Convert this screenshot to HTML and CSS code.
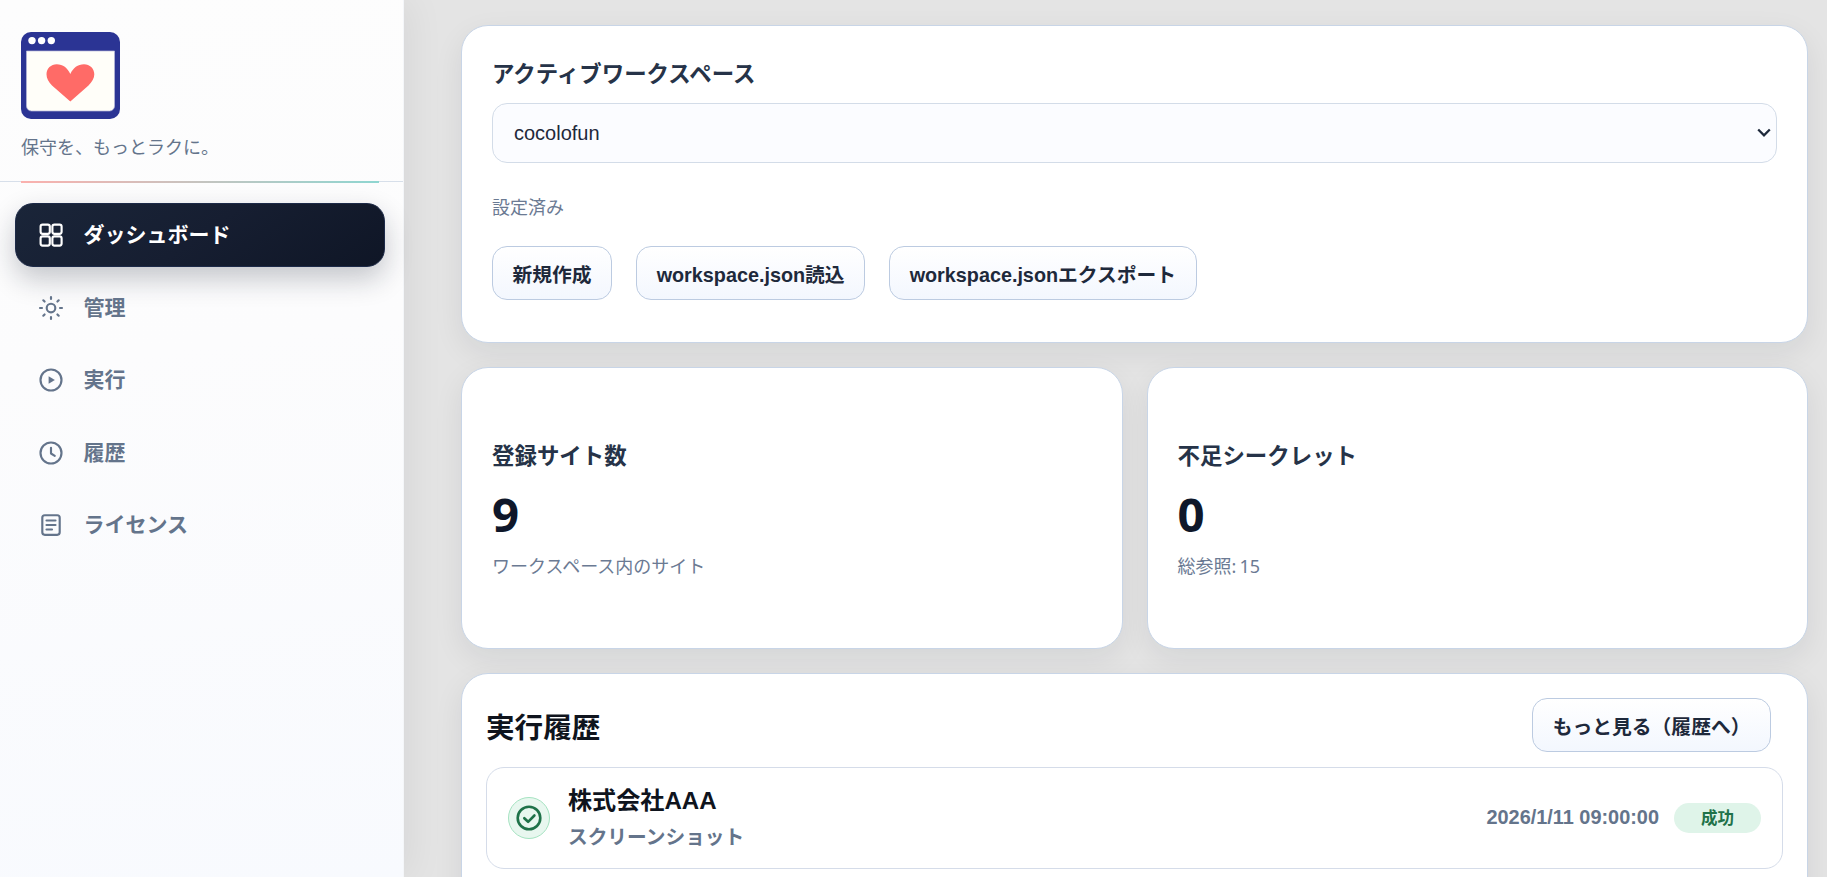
FILE: index.html
```html
<!DOCTYPE html>
<html lang="ja">
<head>
<meta charset="utf-8">
<title>ダッシュボード</title>
<link rel="stylesheet" href="styles.css">
</head>
<body>
<div class="app">
  <aside class="sidebar">
    <div class="brand">
      <svg class="logo" viewBox="0 0 99 87">
        <rect width="99" height="87" rx="10" fill="#2b3494"/>
        <circle cx="11" cy="8.6" r="3.7" fill="#fff"/><circle cx="20.6" cy="8.6" r="3.7" fill="#fff"/><circle cx="30.3" cy="8.6" r="3.7" fill="#fff"/>
        <path d="M5.5 19h88v55a5 5 0 0 1-5 5h-78a5 5 0 0 1-5-5z" fill="#fffef9" stroke="#b7b9d8" stroke-width=".7"/>
        <path d="M49.3 69.5 31 53.5C27.500 50 25.500 46.500 25.500 42.300C25.500 36.500 30 32.300 35.700 32.300C42 32.300 46.500 36 49.300 42C52.200 36 56.700 32.300 63 32.300C68.700 32.300 73.300 36.500 73.300 42.300C73.300 46.500 71 50 67.500 53.500Z" fill="#ff6b67"/>
      </svg>
      <p class="tagline">保守を、もっとラクに。</p>
    </div>
    <nav class="nav">
      <a class="nav-item active"><svg class="icon" viewBox="0 0 26 26"><rect x="2.600" y="2.600" width="9.200" height="9.200" rx="2"/><rect x="14.400" y="2.600" width="9.200" height="9.200" rx="2"/><rect x="2.600" y="14.400" width="9.200" height="9.200" rx="2"/><rect x="14.400" y="14.400" width="9.200" height="9.200" rx="2"/></svg><span class="nav-label">ダッシュボード</span></a>
      <a class="nav-item"><svg class="icon" viewBox="0 0 26 26"><circle cx="13" cy="13" r="4.300"/><path d="M13 2v2M13 22v2M2 13h2M22 13h2M5.300 5.300l1.300 1.300M19.400 19.400l1.300 1.300M5.300 20.700l1.300-1.300M19.400 6.600l1.300-1.300"/></svg><span class="nav-label">管理</span></a>
      <a class="nav-item"><svg class="icon" viewBox="0 0 26 26"><circle cx="13" cy="13" r="10.500"/><path class="solid" d="M10.600 9.200v7.600l6.300-3.800z"/></svg><span class="nav-label">実行</span></a>
      <a class="nav-item"><svg class="icon" viewBox="0 0 26 26"><circle cx="13" cy="13" r="10.500"/><path d="M13 7.800v5.700l3.800 2.300"/></svg><span class="nav-label">履歴</span></a>
      <a class="nav-item"><svg class="icon" viewBox="0 0 26 26"><rect x="4.300" y="3.200" width="17.400" height="19.600" rx="2.500"/><path d="M8.500 8.500h9M8.500 13h9M8.500 17.500h5.500"/></svg><span class="nav-label">ライセンス</span></a>
    </nav>
  </aside>
  <main class="main">
    <section class="card workspace">
      <h2 class="label">アクティブワークスペース</h2>
      <div class="select">cocolofun<svg class="chevron" viewBox="0 0 14 10"><path d="M1.200 1.500 7 7.300l5.800-5.800"/></svg></div>
      <p class="note status">設定済み</p>
      <div class="actions">
        <button class="btn">新規作成</button>
        <button class="btn">workspace.json読込</button>
        <button class="btn">workspace.jsonエクスポート</button>
      </div>
    </section>
    <div class="stats">
      <section class="card stat"><h2 class="label">登録サイト数</h2><div class="value">9</div><p class="note">ワークスペース内のサイト</p></section>
      <section class="card stat"><h2 class="label">不足シークレット</h2><div class="value">0</div><p class="note">総参照: 15</p></section>
    </div>
    <section class="card history">
      <header class="history-head"><h1 class="title">実行履歴</h1><button class="btn">もっと見る（履歴へ）</button></header>
      <article class="run">
        <span class="run-icon"><svg viewBox="0 0 26 26"><circle cx="13" cy="13" r="11.300"/><path d="M8.300 13.200l3.800 3.600 6.300-6.300"/></svg></span>
        <div class="run-text"><div class="run-name">株式会社AAA</div><div class="run-kind">スクリーンショット</div></div>
        <time class="run-time">2026/1/11 09:00:00</time>
        <span class="badge">成功</span>
      </article>
    </section>
  </main>
</div>
</body>
</html>
```
FILE: styles.css
```css
* { box-sizing: border-box; }
body {
  margin: 0;
  height: 877px;
  overflow: hidden;
  background: #e4e4e4;
  color: #0f172a;
  font-family: "Noto Sans", "Noto Sans CJK JP", sans-serif;
}
h1, h2, p { margin: 0; }
.app { display: flex; height: 877px; overflow: hidden; }
.sidebar {
  flex: none;
  width: 404px;
  background: linear-gradient(172deg, #fdfdfd, #fcfcfd 40%, #f8fafe);
  border-right: 1px solid #f4f6f9;
  box-shadow: 6px 0 36px rgba(15, 23, 42, .06);
}
.brand {
  position: relative;
  height: 182px;
  padding: 32px 21px 0;
  border-bottom: 1px solid #d7dfea;
}
.brand::after {
  content: "";
  position: absolute;
  left: 21px;
  right: 24px;
  bottom: -2px;
  height: 2px;
  background: linear-gradient(90deg, #fbb1ae, #8fd6d1);
}
.logo { display: block; width: 99px; height: 87px; }
.tagline { margin-top: 15px; font-size: 18px; line-height: 27px; color: #64748b; }
.nav { display: flex; flex-direction: column; gap: 8.600px; padding: 21px 18px 0 15px; }
.nav-item {
  display: flex;
  align-items: center;
  gap: 19.500px;
  height: 64px;
  padding-left: 23px;
  border-radius: 18px;
  font-size: 21px;
  font-weight: 700;
  line-height: 30px;
  color: #64748b;
}
.nav-label { padding-bottom: 2px; }
.nav-item.active {
  color: #fff;
  background: linear-gradient(145deg, #1a2539, #161e31 50%, #0f1626);
  border: 1px solid #1d2a48;
  padding-left: 22px;
  box-shadow: 0 12px 28px rgba(15, 23, 42, .24);
}
.icon {
  flex: none;
  width: 26px;
  height: 26px;
  fill: none;
  stroke: currentColor;
  stroke-width: 2.150;
  stroke-linecap: round;
  stroke-linejoin: round;
}
.icon .solid { fill: currentColor; stroke: none; }
.main { flex: 1; min-width: 0; padding: 25px 19px 0 57px; display: flex; flex-direction: column; gap: 24px; }
.card {
  flex: none;
  background: #fff;
  border: 1px solid #c8d5e7;
  border-radius: 27px;
  box-shadow: 0 10px 30px rgba(15, 23, 42, .075);
}
.workspace { height: 318px; padding: 31px 30px 0; }
.label { font-size: 22.450px; font-weight: 700; line-height: 34px; color: #263348; }
.select {
  display: flex;
  align-items: center;
  justify-content: space-between;
  height: 60px;
  margin-top: 12px;
  padding: 0 5px 0 21px;
  border: 1px solid #d3dce8;
  border-radius: 15px;
  background: #fbfcff;
  color: #1e293b;
  font: 20px "Liberation Sans", sans-serif;
}
.chevron { width: 14px; height: 10px; fill: none; stroke: #1e293b; stroke-width: 2.300; }
.note { font-size: 18px; line-height: 27px; word-spacing: -1.500px; color: #6b7a93; }
.status { margin-top: 31px; }
.actions { display: flex; gap: 24px; margin-top: 25px; }
.btn {
  height: 54px;
  padding: 0 19.500px;
  border: 1px solid #bccbe1;
  border-radius: 15px;
  background: linear-gradient(#fff, #f3f7fe);
  color: #1e293b;
  font: 700 19.800px "Liberation Sans", "Noto Sans CJK JP", sans-serif;
  white-space: nowrap;
}
.stats { display: grid; grid-template-columns: 1fr 1fr; gap: 24px; }
.stat { height: 282px; padding: 71px 30px 0; }
.value { margin-top: 10px; font-size: 47.400px; font-weight: 700; line-height: 62px; color: #0f172a; }
.stat .note { margin-top: 8px; }
.history { height: 260px; padding: 24px 24px 0; }
.history-head { display: flex; justify-content: space-between; align-items: center; padding-right: 12px; }
.title { padding-top: 3px; font-size: 28.600px; line-height: 42px; color: #0f141d; }
.run {
  display: flex;
  align-items: center;
  height: 102px;
  margin-top: 15px;
  padding: 0 21px;
  border: 1px solid #d5dce9;
  border-radius: 18px;
  font-family: "Liberation Sans", "Noto Sans CJK JP", sans-serif;
  font-weight: 700;
}
.run-icon {
  display: grid;
  place-items: center;
  width: 42px;
  height: 42px;
  border: 1px solid #a5e3c1;
  border-radius: 50%;
  background: #e8f7ef;
}
.run-icon svg { width: 26px; height: 26px; fill: none; stroke: #1f7249; stroke-width: 2.600; stroke-linecap: round; stroke-linejoin: round; }
.run-text { flex: 1; margin-left: 18px; padding-bottom: 2px; }
.run-name { font-size: 24.100px; line-height: 36px; color: #0f141d; }
.run-kind { font-size: 19.700px; line-height: 29px; margin-top: 4px; color: #64748b; }
.run-time { padding-bottom: 2px; font-size: 19.900px; color: #64748b; }
.badge {
  width: 87px;
  height: 30px;
  margin-left: 15px;
  border-radius: 15px;
  background: #dff4e9;
  color: #1f7249;
  font-size: 16.500px;
  line-height: 31px;
  text-align: center;
}
```
